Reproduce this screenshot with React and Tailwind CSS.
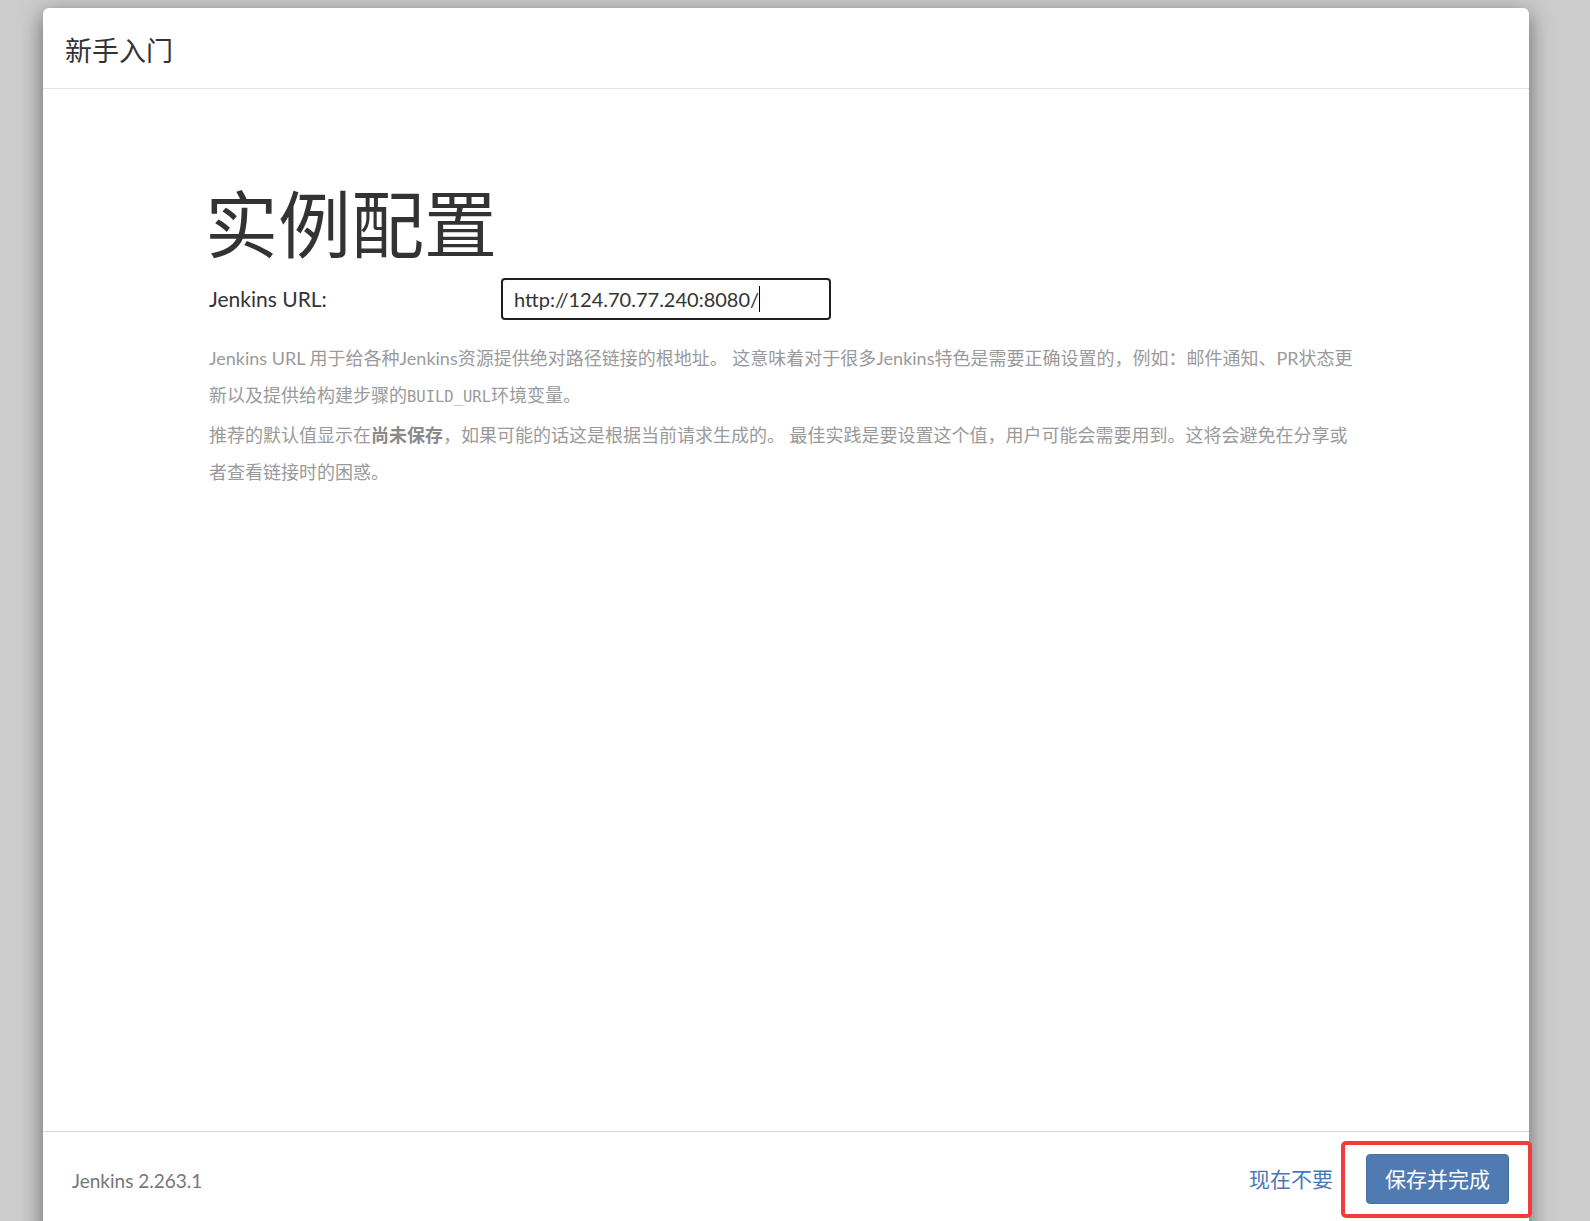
const FONT = { fontFamily: 'Lato, "Noto Sans CJK SC", sans-serif' };

function Header() {
  return (
    <div className="h-[81px] flex items-center pl-[22px] pt-[5px] border-b border-[#e5e5e5]">
      <h4 className="text-[27px] leading-none text-[#333]">新手入门</h4>
    </div>
  );
}

function Body() {
  return (
    <div className="flex-1 pl-[166px]">
      <div className="w-[1154px]">
        <h1 className="mt-[99px] -ml-[4px] text-[73px] leading-[72px] text-[#333]">实例配置</h1>
        <div className="mt-[18px] flex items-center">
          <label className="w-[292px] text-[21px] text-[#333]">Jenkins URL:</label>
          <div className="w-[330px] h-[42px] border-2 border-[#1f1f1f] rounded-[4px] flex items-center pl-[11px] text-[20px] text-[#333]">
            <span>http://124.70.77.240:8080/</span>
            <span className="w-px h-[26px] bg-black"></span>
          </div>
        </div>
        <div className="mt-[20px] text-[18px] leading-[37px] text-[#9a9a9a]">
          <p>
            Jenkins URL 用于给各种Jenkins资源提供绝对路径链接的根地址。 这意味着对于很多Jenkins特色是需要正确设置的，例如：邮件通知、PR状态更新以及提供给构建步骤的
            <code className="text-[15.5px]" style={{ fontFamily: '"DejaVu Sans Mono", monospace' }}>BUILD_URL</code>
            环境变量。
          </p>
          <p className="mt-[1px]">
            推荐的默认值显示在<strong className="font-bold text-[#8a8a8a]">尚未保存</strong>，如果可能的话这是根据当前请求生成的。 最佳实践是要设置这个值，用户可能会需要用到。这将会避免在分享或者查看链接时的困惑。
          </p>
        </div>
      </div>
    </div>
  );
}

function Footer() {
  return (
    <div className="h-[120px] shrink-0 border-t border-[#d9d9d9] flex items-start justify-between pl-[29px] pr-[20px] pt-[22px]">
      <div className="h-[54px] flex items-center text-[19px] text-[#777]">Jenkins 2.263.1</div>
      <div className="flex items-center gap-[33px]">
        <a className="text-[21px] text-[#4b78b5]">现在不要</a>
        <button className="h-[50px] px-[18px] rounded-[4px] bg-[#4f7bb2] border border-[#46709f] text-white text-[21px]">
          保存并完成
        </button>
      </div>
    </div>
  );
}

export default function App() {
  return (
    <div className="relative w-[1590px] h-[1221px] overflow-hidden bg-[#cccccc] pl-[43px] pt-[8px]" style={FONT}>
      <div className="w-[1486px] h-[1243px] bg-white rounded-[6px] flex flex-col shadow-[0_6px_22px_rgba(0,0,0,0.5)]">
        <Header />
        <Body />
        <Footer />
      </div>
      <div className="absolute left-[1341px] top-[1141px] w-[191px] h-[77px] border-[4px] border-[#f23b3b] rounded-[5px]"></div>
    </div>
  );
}
